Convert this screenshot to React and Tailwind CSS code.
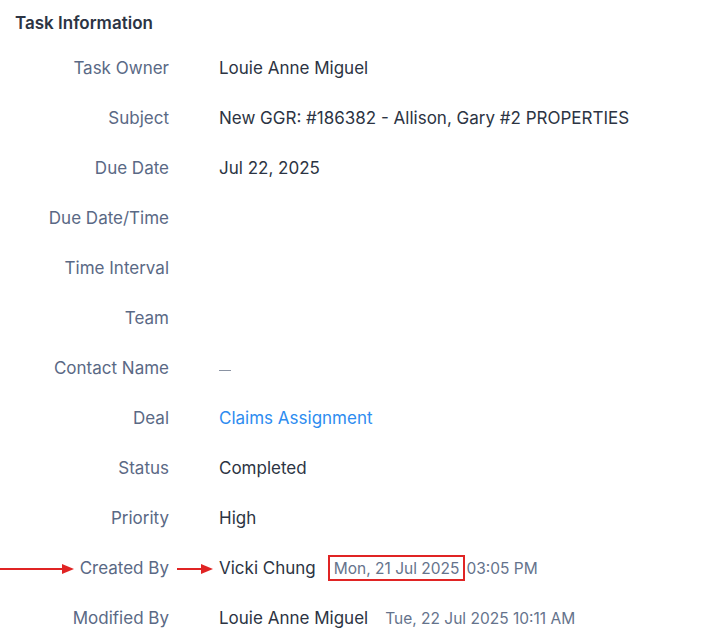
import React from 'react';

const rows = [
    { label: 'Task Owner', value: 'Louie Anne Miguel' },
    { label: 'Subject', value: 'New GGR: #186382 - Allison, Gary #2 PROPERTIES' },
    { label: 'Due Date', value: 'Jul 22, 2025' },
    { label: 'Due Date/Time', value: '' },
    { label: 'Time Interval', value: '' },
    { label: 'Team', value: '' },
    { label: 'Contact Name', value: 'dash' },
    { label: 'Deal', value: 'Claims Assignment', link: true },
    { label: 'Status', value: 'Completed' },
    { label: 'Priority', value: 'High' },
];

const Arrow = ({ width }) => (
    <svg width={width} height="12" viewBox={`0 0 ${width} 12`} className="shrink-0">
        <line x1="0" y1="6" x2={width - 11} y2="6" stroke="#e02424" strokeWidth="2" />
        <polygon points={`${width - 12},1 ${width},6 ${width - 12},11`} fill="#e02424" />
    </svg>
);

const Row = ({ label, children }) => (
    <div className="flex items-center h-[50px]">
        <div className="w-[169px] shrink-0 text-right text-[17px] text-[#5a6985]">{label}</div>
        <div className="flex items-center min-w-0 ml-[50px] text-[17px] text-[#2c3443] whitespace-nowrap">{children}</div>
    </div>
);

export default function App() {
    return (
        <div className="w-[712px] h-[643px] bg-white overflow-hidden" style={{ fontFamily: 'Inter, "Noto Sans", sans-serif' }}>
            <div className="pl-[15px] pt-[11px] h-[44px] text-[17px] font-semibold text-[#2c3443]">Task Information</div>
            {rows.map((row) => (
                <Row key={row.label} label={row.label}>
                    {row.value === 'dash' ? (
                        <span className="block w-[12px] h-[1.5px] bg-[#8a93a3] mt-[3px]" />
                    ) : row.link ? (
                        <span className="text-[#2d8cf0]">{row.value}</span>
                    ) : (
                        <span>{row.value}</span>
                    )}
                </Row>
            ))}

            {/* created by row with annotation arrows */}
            <div className="flex items-center h-[50px]">
                <div className="w-[169px] shrink-0 flex items-center text-[17px] text-[#5a6985]">
                    <Arrow width={74} />
                    <span className="ml-auto">Created By</span>
                </div>
                <div className="flex items-center ml-[8px] text-[17px] text-[#2c3443] whitespace-nowrap">
                    <Arrow width={36} />
                    <span className="ml-[6px]">Vicki Chung</span>
                    <span className="ml-[18px] text-[15.5px] text-[#65738c]">
                        <span className="relative">
                            Mon, 21 Jul 2025
                            <span className="absolute -left-[6px] -right-[6px] -top-[4px] -bottom-[3px] border-2 border-[#e02424]" />
                        </span>
                        <span className="ml-[7px]">03:05 PM</span>
                    </span>
                </div>
            </div>

            <Row label="Modified By">
                <span>Louie Anne Miguel</span>
                <span className="ml-[17px] text-[15.5px] text-[#65738c]">Tue, 22 Jul 2025 10:11 AM</span>
            </Row>
        </div>
    );
}
